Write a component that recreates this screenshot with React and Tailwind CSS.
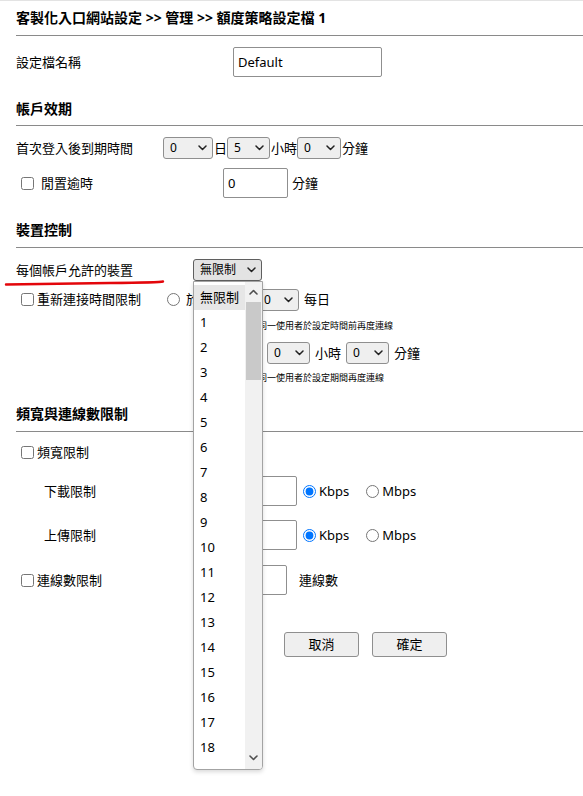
import React from "react";

function Chevron({ className = "" }) {
  return (
    <svg width="9" height="6" viewBox="0 0 9 6" className={className}>
      <path d="M1 1 L4.5 4.5 L8 1" fill="none" stroke="#222" strokeWidth="1.5" strokeLinecap="round" strokeLinejoin="round" />
    </svg>
  );
}

function Sel({ value, w, open = false }) {
  return (
    <div
      className={`flex items-center justify-between h-[22px] rounded-[3px] border pl-[6px] pr-[5px] text-[12px] leading-none text-black ${w} ${
        open ? "border-[#5f5f5f] bg-[#e3e3e3]" : "border-[#8f8f8f] bg-[#efefef]"
      }`}
    >
      <span>{value}</span>
      <Chevron />
    </div>
  );
}

function TextBox({ value = "", w }) {
  return (
    <div className={`flex items-center h-[30px] rounded-[2px] border border-[#8f8f8f] bg-white pl-[4px] text-[13px] leading-none ${w}`}>
      {value}
    </div>
  );
}

function Header({ children, mt }) {
  return (
    <div className={`${mt} h-[20px] flex items-center text-[14px] font-bold leading-none`}>{children}</div>
  );
}

function Rule({ mt }) {
  return <div className={`${mt} h-px bg-[#8a8a8a]`} />;
}

function Check() {
  return <input type="checkbox" className="m-0 ml-[5px] w-[13px] h-[13px] shrink-0" />;
}

export default function App() {
  const items = ["無限制", "1", "2", "3", "4", "5", "6", "7", "8", "9", "10", "11", "12", "13", "14", "15", "16", "17", "18"];
  return (
    <div className="relative w-[583px] h-[796px] overflow-hidden bg-white text-[13px] text-black font-['Noto_Sans','Noto_Sans_CJK_TC',sans-serif]">
      <div className="h-px bg-[#e3e3e3]" />
      <div className="pl-4">
        <div className="h-[34px] flex items-center text-[14px] font-bold leading-none">
          客製化入口網站設定 &gt;&gt; 管理 &gt;&gt; 額度策略設定檔 1
        </div>
        <Rule mt="mt-0" />

        <div className="mt-[11px] h-[30px] flex items-center">
          <div className="w-[217px] leading-none">設定檔名稱</div>
          <TextBox value="Default" w="w-[149px]" />
        </div>

        <Header mt="mt-[22px]">帳戶效期</Header>
        <Rule mt="mt-[6px]" />

        <div className="mt-[11px] h-[22px] flex items-center leading-none">
          <div className="w-[147px]">首次登入後到期時間</div>
          <Sel value="0" w="w-[50px]" />
          <span className="ml-[1px]">日</span>
          <Sel value="5" w="w-[43px]" />
          <span className="ml-[1px]">小時</span>
          <Sel value="0" w="w-[44px]" />
          <span className="ml-[1px]">分鐘</span>
        </div>

        <div className="mt-[9px] h-[30px] flex items-center leading-none">
          <div className="w-[207px] flex items-center">
            <Check />
            <span className="ml-[7px]">閒置逾時</span>
          </div>
          <TextBox value="0" w="w-[65px]" />
          <span className="ml-[4px]">分鐘</span>
        </div>

        <Header mt="mt-[22px]">裝置控制</Header>
        <Rule mt="mt-[7px]" />

        <div className="mt-[11px] h-[22px] flex items-center leading-none">
          <div className="w-[177px]">每個帳戶允許的裝置</div>
          <Sel value="無限制" w="w-[69px]" open />
        </div>

        <div className="mt-[7px] h-[23px] flex items-center leading-none">
          <div className="w-[151px] flex items-center">
            <Check />
            <span className="ml-[3px]">重新連接時間限制</span>
          </div>
          <input type="radio" name="rc" className="m-0 w-[13px] h-[13px] shrink-0" />
          <span className="ml-[6px]">於</span>
          <div className="w-[58px]" />
          <Sel value="0" w="w-[42px]" />
          <span className="ml-[5px]">每日</span>
        </div>
        <div className="mt-[7px] h-[14px] flex items-center pl-[242px] text-[9px] leading-none whitespace-nowrap">
          同一使用者於設定時間前再度連線
        </div>

        <div className="mt-[10px] h-[22px] flex items-center leading-none">
          <div className="w-[251px]" />
          <Sel value="0" w="w-[43px]" />
          <span className="ml-[5px]">小時</span>
          <div className="ml-[5px]">
            <Sel value="0" w="w-[43px]" />
          </div>
          <span className="ml-[5px]">分鐘</span>
        </div>
        <div className="mt-[6px] h-[14px] flex items-center pl-[242px] text-[9px] leading-none whitespace-nowrap">
          同一使用者於設定期間再度連線
        </div>

        <Header mt="mt-[20px]">頻寬與連線數限制</Header>
        <Rule mt="mt-[7px]" />

        <div className="mt-[9px] h-[22px] flex items-center leading-none">
          <Check />
          <span className="ml-[3px]">頻寬限制</span>
        </div>

        <div className="mt-[13px] h-[30px] flex items-center leading-none">
          <div className="w-[217px] pl-[28px]">下載限制</div>
          <TextBox w="w-[64px]" />
          <input type="radio" name="dl" defaultChecked className="m-0 ml-[6px] w-[13px] h-[13px] shrink-0" />
          <span className="ml-[3px]">Kbps</span>
          <input type="radio" name="dl" className="m-0 ml-[17px] w-[13px] h-[13px] shrink-0" />
          <span className="ml-[3px]">Mbps</span>
        </div>

        <div className="mt-[14px] h-[30px] flex items-center leading-none">
          <div className="w-[217px] pl-[28px]">上傳限制</div>
          <TextBox w="w-[64px]" />
          <input type="radio" name="ul" defaultChecked className="m-0 ml-[6px] w-[13px] h-[13px] shrink-0" />
          <span className="ml-[3px]">Kbps</span>
          <input type="radio" name="ul" className="m-0 ml-[17px] w-[13px] h-[13px] shrink-0" />
          <span className="ml-[3px]">Mbps</span>
        </div>

        <div className="mt-[15px] h-[30px] flex items-center leading-none">
          <div className="w-[207px] flex items-center">
            <Check />
            <span className="ml-[3px]">連線數限制</span>
          </div>
          <TextBox w="w-[64px]" />
          <span className="ml-[12px]">連線數</span>
        </div>

        <div className="mt-[37px] h-[25px] flex items-center gap-[13px] pl-[268px]">
          <button className="w-[75px] h-[25px] rounded-[3px] border border-[#8f8f8f] bg-[#efefef] text-[13px] leading-none">取消</button>
          <button className="w-[75px] h-[25px] rounded-[3px] border border-[#8f8f8f] bg-[#efefef] text-[13px] leading-none">確定</button>
        </div>
      </div>

      {/* red hand-drawn underline */}
      <svg className="absolute left-0 top-[276px] pointer-events-none" width="170" height="14" viewBox="0 0 170 14">
        <path d="M6 8.5 Q60 7.5 110 7 T163 5.5" fill="none" stroke="#e3060b" strokeWidth="2.4" strokeLinecap="round" />
      </svg>

      {/* opened dropdown list */}
      <div className="absolute left-[193px] top-[281px] w-[70px] h-[489px] flex bg-white border border-[#a3a3a3] rounded-b-[4px] shadow-[0_2px_4px_rgba(0,0,0,0.15)] overflow-hidden">
        <div className="w-[51px] pt-[3px] flex flex-col">
          {items.map((it, i) => (
            <div
              key={it}
              className={`h-[25px] shrink-0 flex items-center pl-[6px] text-[13px] leading-none ${i === 0 ? "bg-[#e6e6e6]" : ""}`}
            >
              {it}
            </div>
          ))}
        </div>
        <div className="w-[17px] bg-[#f1f1f1] flex flex-col items-center">
          <div className="h-[20px] flex items-center justify-center">
            <svg width="9" height="6" viewBox="0 0 9 6">
              <path d="M1 5 L4.5 1.5 L8 5" fill="none" stroke="#505050" strokeWidth="1.6" strokeLinecap="round" strokeLinejoin="round" />
            </svg>
          </div>
          <div className="w-[15px] h-[78px] bg-[#c9c9c9]" />
          <div className="flex-1" />
          <div className="h-[22px] flex items-center justify-center">
            <svg width="9" height="6" viewBox="0 0 9 6">
              <path d="M1 1 L4.5 4.5 L8 1" fill="none" stroke="#505050" strokeWidth="1.6" strokeLinecap="round" strokeLinejoin="round" />
            </svg>
          </div>
        </div>
      </div>
    </div>
  );
}
